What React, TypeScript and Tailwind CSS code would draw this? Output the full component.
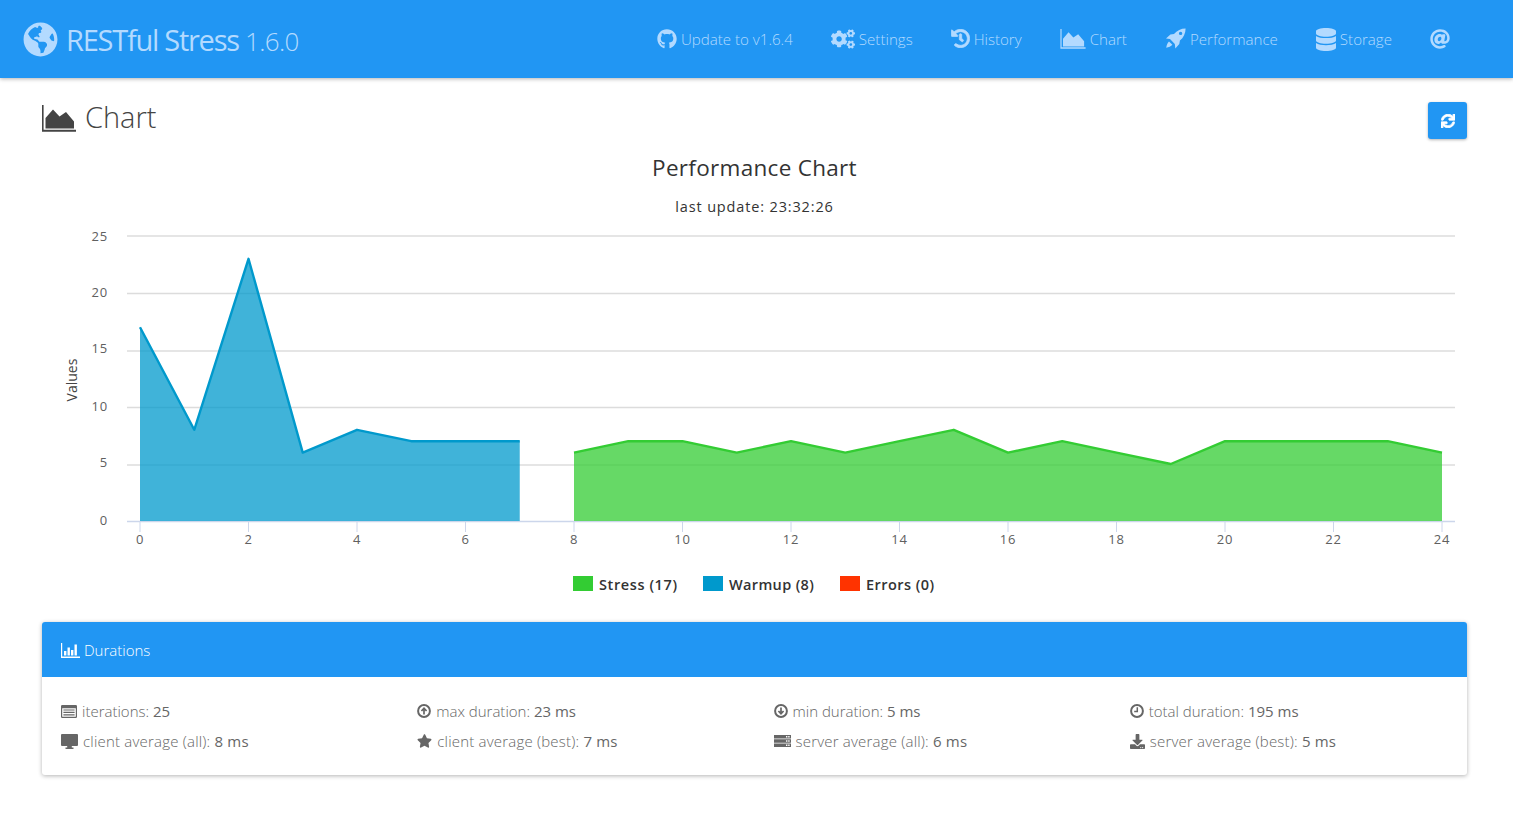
import React from "react";
import {
  FaGlobeAmericas, FaGithub, FaCogs, FaHistory, FaDatabase, FaAt, FaSync,
  FaStar, FaDownload,
} from "react-icons/fa";

const AreaIcon = ({ className }: { className?: string }) => (
  <svg viewBox="0 0 34 27" className={className} fill="currentColor">
    <path d="M0 0h1.6v24.8H34v2H0z" />
    <path d="M3.5 23.5V13L11 4.5l6.5 7L24 7l8 9.5v7z" />
  </svg>
);

const BarIcon = ({ className }: { className?: string }) => (
  <svg viewBox="0 0 19 15" className={className} fill="currentColor">
    <path d="M0 0h1.2v13.6H19V15H0z" />
    <path d="M3 8h2.4v4.5H3zM6.5 4.5h2.4v8H6.5zM10 7h2.4v5.5H10zM13.5 1.5h2.4v11h-2.4z" />
  </svg>
);

const RocketIcon = ({ className }: { className?: string }) => (
  <svg viewBox="0 0 21 21" className={className} fill="currentColor">
    <path
      fillRule="evenodd"
      d="M20.6.4C16 .4 12 2.4 9 6L5.4 6.6 1 10.6l4 .5 4.8 4.8.5 4.6 4-4.4.6-3.6c3.6-3 5.7-7 5.7-12.1zM15.6 3.7a1.7 1.7 0 1 1 0 3.4 1.7 1.7 0 0 1 0-3.4z"
    />
    <path d="M4 13.4l3.4 3.4c-1.4 1.6-3.6 2.6-6.2 3 .4-2.7 1.2-4.9 2.8-6.4z" />
  </svg>
);

const ServerIcon = ({ className }: { className?: string }) => (
  <svg viewBox="0 0 17 12" className={className} fill="currentColor">
    <path
      fillRule="evenodd"
      d="M0 0h17v3.4H0zM12 1h1.4v1.4H12zM14.2 1h1.4v1.4h-1.4zM0 4.3h17v3.4H0zM12 5.3h1.4v1.4H12zM14.2 5.3h1.4v1.4h-1.4zM0 8.6h17V12H0zM12 9.6h1.4V11H12zM14.2 9.6h1.4V11h-1.4z"
    />
  </svg>
);

const ListIcon = ({ className }: { className?: string }) => (
  <svg viewBox="0 0 16 13" className={className} fill="currentColor">
    <path d="M1.2 0h13.6A1.2 1.2 0 0 1 16 1.2v10.6a1.2 1.2 0 0 1-1.2 1.2H1.2A1.2 1.2 0 0 1 0 11.8V1.2A1.2 1.2 0 0 1 1.2 0zM1.2 3.2v8.6h13.6V3.2z" />
    <path d="M2.4 4.4h11.2v1.2H2.4zM2.4 6.8h11.2V8H2.4zM2.4 9.2h11.2v1.2H2.4z" />
  </svg>
);

const MonitorIcon = ({ className }: { className?: string }) => (
  <svg viewBox="0 0 17 15" className={className} fill="currentColor">
    <path d="M1 0h15a1 1 0 0 1 1 1v10a1 1 0 0 1-1 1h-5.2v1.6h1.7V15h-8v-1.4h1.7V12H1a1 1 0 0 1-1-1V1a1 1 0 0 1 1-1z" />
  </svg>
);

const CircleArrow = ({ className, down }: { className?: string; down?: boolean }) => (
  <svg viewBox="0 0 14 14" className={className} fill="none">
    <circle cx="7" cy="7" r="5.9" stroke="currentColor" strokeWidth="2" />
    <path d={down ? "M7 3.5v6M4.4 7 7 9.7 9.6 7" : "M7 10.5v-6M4.4 7 7 4.3 9.6 7"} stroke="currentColor" strokeWidth="1.7" />
  </svg>
);

const ClockIcon = ({ className }: { className?: string }) => (
  <svg viewBox="0 0 14 14" className={className} fill="none">
    <circle cx="7" cy="7" r="5.9" stroke="currentColor" strokeWidth="2" />
    <path d="M7.3 3.2v4.3H4.2" stroke="currentColor" strokeWidth="1.5" />
  </svg>
);

const nav = [
  { label: "Update to v1.6.4", icon: <FaGithub className="h-[20px] w-[20px]" /> },
  { label: "Settings", icon: <FaCogs className="h-[22px] w-[24px]" /> },
  { label: "History", icon: <FaHistory className="h-[19px] w-[19px]" stroke="currentColor" strokeWidth={20} /> },
  { label: "Chart", icon: <AreaIcon className="h-[20px] w-[26px]" /> },
  { label: "Performance", icon: <RocketIcon className="h-[21px] w-[21px]" /> },
  { label: "Storage", icon: <FaDatabase className="h-[23px] w-[20px]" /> },
];

const stats = [
  [<ListIcon className="h-[13px] w-[16px]" />, "iterations:", "25"],
  [<CircleArrow className="h-[14px] w-[14px]" />, "max duration:", "23 ms"],
  [<CircleArrow down className="h-[14px] w-[14px]" />, "min duration:", "5 ms"],
  [<ClockIcon className="h-[14px] w-[14px]" />, "total duration:", "195 ms"],
  [<MonitorIcon className="h-[15px] w-[17px]" />, "client average (all):", "8 ms"],
  [<FaStar className="h-[14px] w-[15px]" />, "client average (best):", "7 ms"],
  [<ServerIcon className="h-[12px] w-[17px]" />, "server average (all):", "6 ms"],
  [<FaDownload className="h-[15px] w-[15px]" />, "server average (best):", "5 ms"],
] as const;

const X0 = 98;
const DX = 54.25;
const Y0 = 369;
const DY = 11.4;
const pt = (i: number, v: number) => `${X0 + i * DX},${Y0 - v * DY}`;
const warmup = [17, 8, 23, 6, 8, 7, 7, 7];
const stress = [6, 7, 7, 6, 7, 6, 7, 8, 6, 7, 6, 5, 7, 7, 7, 7, 6];

function Series({ data, start, color }: { data: number[]; start: number; color: string }) {
  const line = data.map((v, i) => pt(start + i, v)).join(" ");
  const area = `${pt(start, 0)} ${line} ${pt(start + data.length - 1, 0)}`;
  return (
    <g>
      <polygon points={area} fill={color} fillOpacity={0.75} />
      <polyline points={line} fill="none" stroke={color} strokeWidth={2.4} strokeLinejoin="round" />
    </g>
  );
}

function Chart() {
  const sans = { fontFamily: '"Open Sans", sans-serif', fontWeight: 400 };
  const label = { ...sans, letterSpacing: "0.8px" };
  const grid = [
    [25, 84],
    [20, 141.5],
    [15, 199],
    [10, 255.5],
    [5, 313],
  ];
  const yLabels = [
    [25, 89],
    [20, 145],
    [15, 201],
    [10, 259],
    [5, 315],
    [0, 373],
  ];
  return (
    <svg viewBox="0 0 1425 460" className="block h-[460px] w-[1425px]">
      <text x="712.5" y="24" textAnchor="middle" fontSize="22.5" fill="#333333" style={{ ...sans, letterSpacing: "0.3px" }}>
        Performance Chart
      </text>
      <text x="712.5" y="60" textAnchor="middle" fontSize="14.5" fill="#333333" style={{ ...sans, letterSpacing: "0.85px" }}>
        last update: 23:32:26
      </text>
      {grid.map(([v, y]) => (
        <line key={v} x1="85" x2="1413" y1={y} y2={y} stroke="#dcdcdc" strokeWidth="1.5" />
      ))}
      {yLabels.map(([v, y]) => (
        <text key={v} x="66" y={y} textAnchor="end" fontSize="13" fill="#606060" style={label}>
          {v}
        </text>
      ))}
      <text transform="translate(35 228) rotate(-90)" textAnchor="middle" fontSize="14" fill="#444444" style={sans}>
        Values
      </text>
      <line x1="85" x2="1413" y1="369.5" y2="369.5" stroke="#ccd6eb" strokeWidth="1.5" />
      <Series data={warmup} start={0} color="#0099cc" />
      <Series data={stress} start={8} color="#33cc33" />
      {Array.from({ length: 13 }, (_, k) => k * 2).map((v) => (
        <g key={v}>
          <line x1={X0 + v * DX} x2={X0 + v * DX} y1="370" y2="380" stroke="#ccd6eb" />
          <text x={X0 + v * DX} y="392" textAnchor="middle" fontSize="13" fill="#606060" style={label}>
            {v}
          </text>
        </g>
      ))}
      {[
        [531, "#33cc33", 557, "Stress (17)", "0.6px"],
        [661, "#0099cc", 687, "Warmup (8)", "0.35px"],
        [798, "#ff3300", 824, "Errors (0)", "0.45px"],
      ].map(([x, c, tx, text, ls]) => (
        <g key={text as string}>
          <rect x={x as number} y="424" width="20" height="15" fill={c as string} />
          <text x={tx as number} y="438" fontSize="14.5" fill="#333333" style={{ ...sans, fontWeight: 600, letterSpacing: ls as string }}>
            {text}
          </text>
        </g>
      ))}
    </svg>
  );
}

export default function App() {
  return (
    <div className="min-h-[831px] bg-white font-['Open_Sans',sans-serif] font-light text-[#555555]">
      <header className="flex h-[78px] items-center justify-between bg-[#2196f3] pr-[63px] pl-[23px] text-[#b3daff] shadow-[0_1px_4px_rgba(0,0,0,0.3)]">
        <div className="flex items-center gap-[8px]">
          <FaGlobeAmericas className="h-[35px] w-[35px]" />
          <span className="text-[29px] leading-none font-normal tracking-[-1.25px]">
            RESTful Stress{" "}
            <span className="text-[26px] font-light tracking-[-0.7px]">1.6.0</span>
          </span>
        </div>
        <nav className="flex items-center gap-[38px] text-[15.1px]">
          {nav.map((n) => (
            <div key={n.label} className="flex items-center gap-[4px]">
              {n.icon}
              <span>{n.label}</span>
            </div>
          ))}
          <FaAt className="h-[20px] w-[20px]" />
        </nav>
      </header>

      <main className="pr-[46px] pl-[42px]">
        <div className="flex items-start justify-between pt-[24px]">
          <h1 className="flex h-[33px] items-center gap-[9px] text-[29px] text-[#444444]">
            <AreaIcon className="h-[27px] w-[34px]" />
            <span className="pb-[4px]">Chart</span>
          </h1>
          <button className="flex h-[37px] w-[39px] items-center justify-center rounded-[3px] bg-[#2196f3] pt-[1px] pl-[1px] text-white shadow-[0_1px_3px_rgba(0,0,0,0.3)]">
            <FaSync className="h-[14px] w-[14px]" stroke="currentColor" strokeWidth={30} />
          </button>
        </div>

        <div className="mt-[13px]">
          <Chart />
        </div>

        <section className="mt-[10px] overflow-hidden rounded-[3px] shadow-[0_1px_4px_rgba(0,0,0,0.3)]">
          <div className="flex h-[55px] items-center gap-[4px] bg-[#2196f3] px-[19px] pt-[1px] text-[15px] text-white">
            <BarIcon className="h-[15px] w-[19px]" />
            Durations
          </div>
          <div className="grid grid-cols-4 py-[19px] text-[15px] leading-[30px]">
            {stats.map(([icon, label, value], i) => (
              <div key={i} className="flex items-center gap-[5px] pl-[19px] text-[#666666]">
                {icon}
                <span className={i >= 4 ? "tracking-[0.2px]" : "tracking-normal"}>
                  {label} <span className="font-normal text-[#666666]">{value}</span>
                </span>
              </div>
            ))}
          </div>
        </section>
      </main>
    </div>
  );
}
